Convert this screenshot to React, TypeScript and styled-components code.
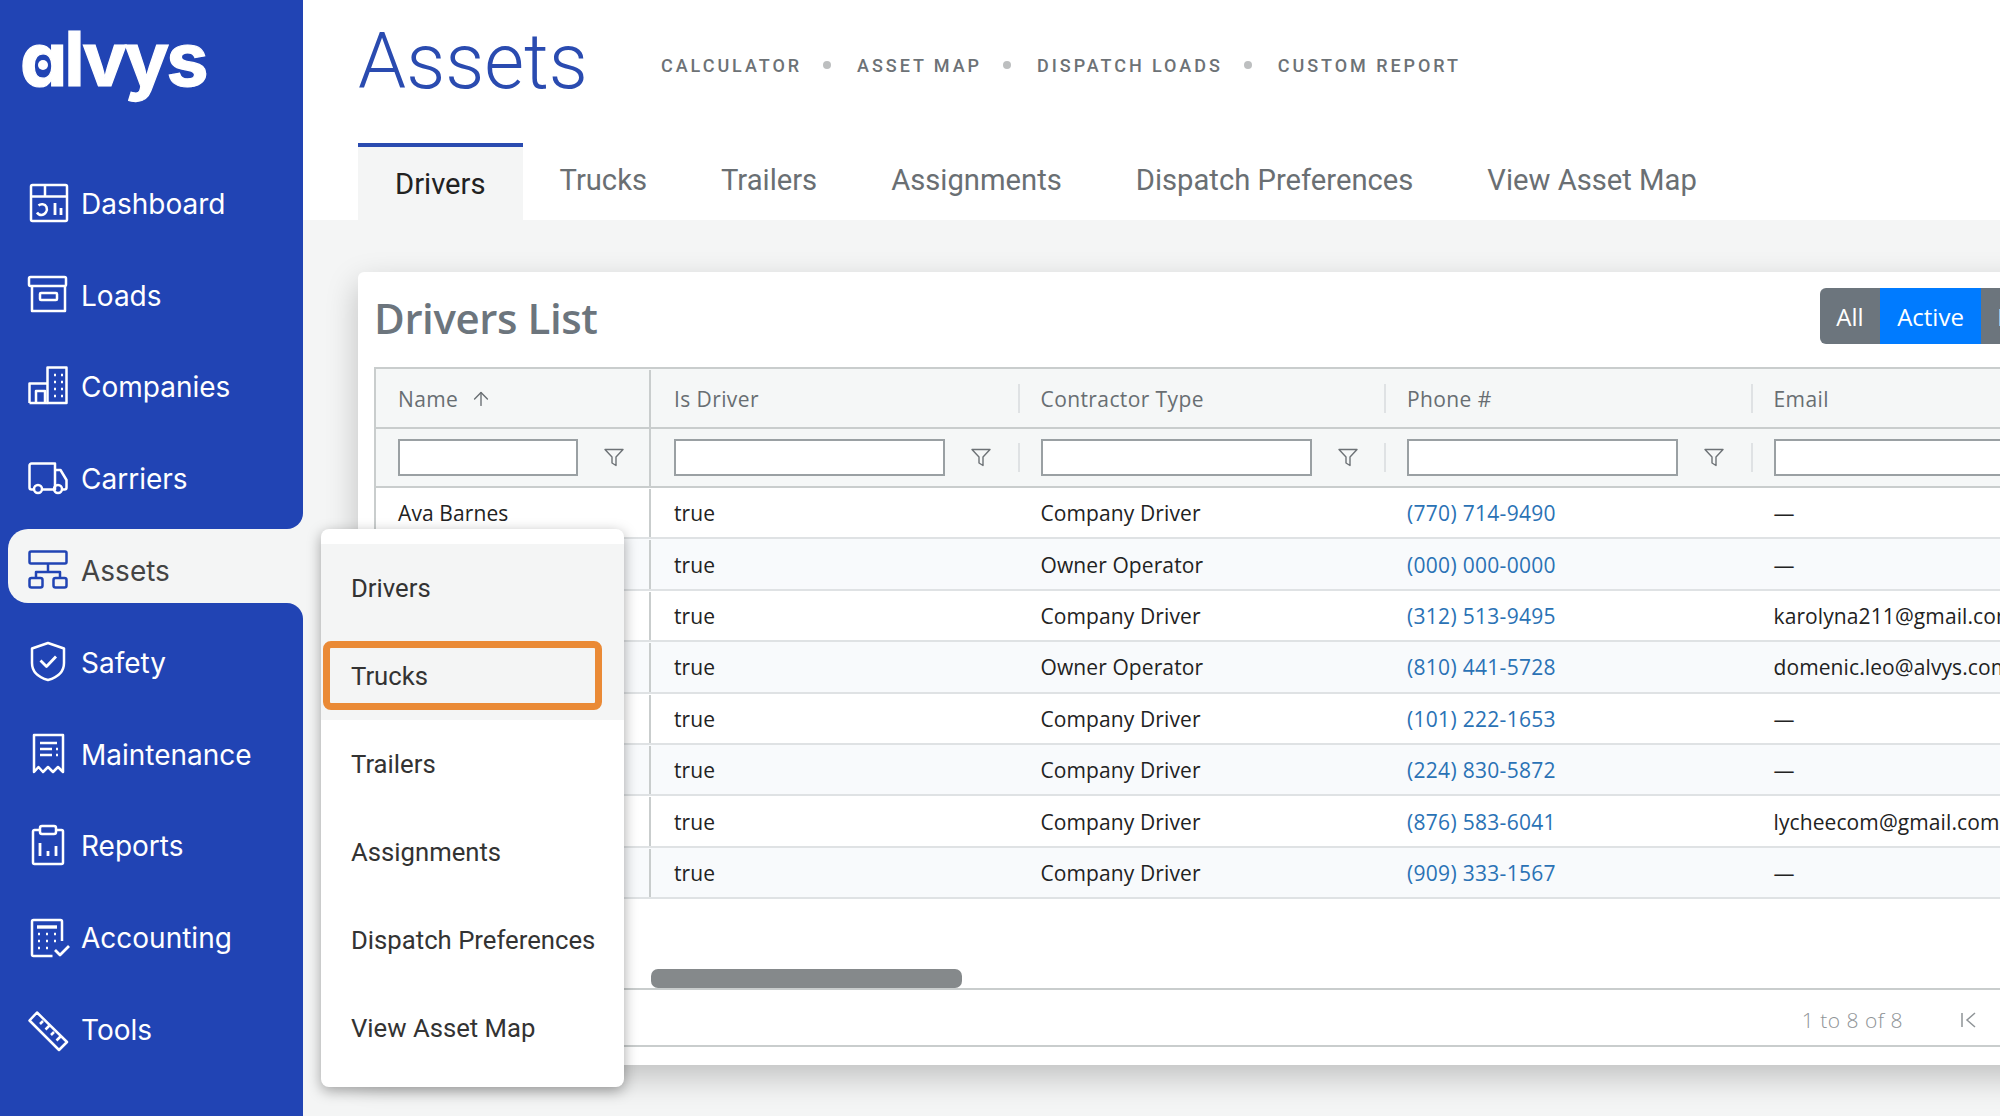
import { ReactNode } from 'react';
import styled, { createGlobalStyle } from 'styled-components';
import { ArrowUp } from 'lucide-react';

const GlobalStyle = createGlobalStyle`
  html, body {
    margin: 0;
    padding: 0;
    width: 2000px;
    height: 1116px;
    overflow: hidden;
    background: #f4f5f5;
  }
  * {
    box-sizing: border-box;
  }
`;

const BLUE = '#2144b4';

const Page = styled.div`
  position: relative;
  display: flex;
  width: 2000px;
  height: 1116px;
  overflow: hidden;
  background: #f4f5f5;
`;

/* sidebar */

const Sidebar = styled.aside`
  display: flex;
  flex-direction: column;
  flex: 0 0 303px;
  height: 100%;
`;

const SideTop = styled.div`
  height: 529px;
  background: ${BLUE};
  border-bottom-right-radius: 16px;
`;

const SideBottom = styled.div`
  flex: 1;
  padding-top: 14px;
  background: ${BLUE};
  border-top-right-radius: 16px;
`;

const ActiveWrap = styled.div`
  height: 74px;
  padding-left: 8px;
  background: linear-gradient(to right, ${BLUE} 30px, transparent 30px);
`;

const ActivePill = styled.div`
  display: flex;
  align-items: center;
  gap: 13px;
  height: 100%;
  padding: 10px 0 0 20px;
  background: #f4f5f5;
  border-radius: 20px 0 0 20px;
  color: #444;
  font-family: Inter, sans-serif;
  font-size: 28px;
  svg {
    color: ${BLUE};
  }
`;

const LogoBox = styled.div`
  position: relative;
  height: 158px;
  padding: 7px 0 0 20px;
`;

const LogoText = styled.span`
  display: block;
  color: #fff;
  font-family: Inter, sans-serif;
  font-size: 75px;
  font-weight: 700;
  line-height: 104px;
  letter-spacing: -3px;
  font-feature-settings: 'cv11' 1;
  -webkit-text-stroke: 1.2px #fff;
`;

const LogoDot = styled.span`
  position: absolute;
  left: 38px;
  top: 60px;
  width: 10px;
  height: 10px;
  border-radius: 50%;
  background: #fff;
`;

const NavRow = styled.div`
  display: flex;
  align-items: center;
  gap: 13px;
  height: 91.7px;
  padding-left: 28px;
  color: #fff;
  font-family: Inter, sans-serif;
  font-size: 28px;
`;

const IconSvg = styled.svg.attrs({
  viewBox: '0 0 40 40',
  fill: 'none',
  stroke: 'currentColor',
  strokeWidth: 2.5,
  strokeLinejoin: 'round',
})`
  flex: 0 0 40px;
  width: 40px;
  height: 40px;
  overflow: visible;
`;

const NavIcon = ({ children }: { children: ReactNode }) => <IconSvg>{children}</IconSvg>;

const DashboardIcon = () => (
  <NavIcon>
    <rect x="3" y="1" width="36" height="36" rx="1.5" />
    <path d="M3 12.500h36M17 1v11.500" />
    <path d="M10.500 21.500c2-1.800 6.500-1.800 8 1.500 1.300 3.300-1 8-5 8-2 0-3.500-.8-4.500-2.500" />
    <path d="M27 19v12M33 24v7" strokeWidth="2.800" />
  </NavIcon>
);

const LoadsIcon = () => (
  <NavIcon>
    <rect x="1" y="1" width="37" height="9" rx="1.500" />
    <path d="M4 10v25h33V10" />
    <rect x="12" y="17" width="17" height="7" rx="1" />
  </NavIcon>
);

const CompaniesIcon = () => (
  <NavIcon>
    <path d="M1.500 36V16.500h18" />
    <path d="M19.500 36V.5h19V36z" />
    <path d="M1.500 36h18M8 36V24h9v12" />
    <path d="M26 8h2M33 8h2M26 15h2M33 15h2M26 22h2M33 22h2M26 29h2M33 29h2" />
  </NavIcon>
);

const CarriersIcon = () => (
  <NavIcon>
    <path d="M6 30.500H3.500a2 2 0 0 1-2-2V6.500a2 2 0 0 1 2-2H27v26H14" />
    <path d="M27 11h5.500l6 10v7.500a2 2 0 0 1-2 2H34M27 30.500h-1" />
    <circle cx="10" cy="30" r="4" />
    <circle cx="30" cy="30" r="4" />
  </NavIcon>
);

const AssetsIcon = () => (
  <NavIcon>
    <rect x="1.500" y=".5" width="37" height="12" rx="1.500" />
    <path d="M20 12.500v8.500M8 27v-6h24v6" />
    <rect x="1.500" y="27" width="13" height="9.500" rx="2" />
    <rect x="25.500" y="27" width="13" height="9.500" rx="2" />
  </NavIcon>
);

const SafetyIcon = () => (
  <NavIcon>
    <path d="M20 0 36 5.500v14.500c0 9-7 14.500-16 17C11 34.500 4 29 4 20V5.500z" />
    <path d="m12.500 17.500 6 6 9.500-10" strokeWidth="2.800" />
  </NavIcon>
);

const MaintenanceIcon = () => (
  <NavIcon>
    <path d="M6 0h29v37l-5-5-5 5-5-5-5 5-4.500-5L6 37z" />
    <path d="M12 8h17M12 14h12M28 14h2M12 20h12M28 20h2" strokeWidth="2.600" />
  </NavIcon>
);

const ReportsIcon = () => (
  <NavIcon>
    <path d="M12 4H6.500A1.500 1.500 0 0 0 5 5.500v31A1.500 1.500 0 0 0 6.500 38h27a1.500 1.500 0 0 0 1.500-1.500v-31A1.500 1.500 0 0 0 33.500 4H28" />
    <rect x="12" y="0" width="16" height="8" rx="2" />
    <path d="M12 17v13M20 25v5M28 20v10" strokeWidth="2.800" />
  </NavIcon>
);

const AccountingIcon = () => (
  <NavIcon>
    <path d="M34 23V3.500A1.500 1.500 0 0 0 32.500 2h-27A1.500 1.500 0 0 0 4 3.500v33A1.500 1.500 0 0 0 5.500 38h19" />
    <path d="M9 9h20" strokeWidth="3.400" />
    <path d="M10 16h2M18 16h2M26 16h2M10 23h2M18 23h2M26 23h2M10 30h2M18 30h2" />
    <path d="m27 32 5 5 9-9" strokeWidth="2.800" />
  </NavIcon>
);

const ToolsIcon = () => (
  <NavIcon>
    <path d="M9 2.500 39 32l-8 8L1.500 10.500z" />
    <path d="m12 14 3-3M17.500 19.500l4-4M23 25l3-3M28.500 30.500l4-4" />
  </NavIcon>
);

/* main header */

const Main = styled.main`
  flex: 1;
  min-width: 0;
`;

const Header = styled.header`
  height: 220px;
  padding-left: 55px;
  background: #fff;
`;

const TitleRow = styled.div`
  display: flex;
  align-items: center;
  height: 143px;
  padding-bottom: 18px;
`;

const Title = styled.h1`
  width: 303px;
  margin: 0;
  color: #2a4bb0;
  font-family: Roboto, sans-serif;
  font-size: 77px;
  font-weight: 300;
  line-height: 1;
`;

const QuickLinks = styled.nav`
  display: flex;
  align-items: center;
  padding-top: 6px;
  color: #6d7276;
  font-family: Roboto, sans-serif;
  font-size: 18px;
  font-weight: 500;
  letter-spacing: 2.950px;
`;

const QuickDot = styled.span`
  width: 8px;
  height: 8px;
  margin: 0 26px 2px 21px;
  border-radius: 50%;
  background: #bdbfc0;
`;

const Tabs = styled.div`
  display: flex;
  height: 77px;
`;

const Tab = styled.div<{ $active?: boolean }>`
  display: flex;
  align-items: center;
  padding: 0 37px ${(p) => (p.$active ? '0' : '3px')};
  border-top: ${(p) => (p.$active ? '4px solid #2a4bb0' : 'none')};
  background: ${(p) => (p.$active ? '#f4f5f5' : 'transparent')};
  color: ${(p) => (p.$active ? '#222' : '#6a6f73')};
  font-family: Roboto, sans-serif;
  font-size: 29.200px;
`;

/* card */

const Content = styled.div`
  padding: 52px 0 0 55px;
`;

const Card = styled.section`
  width: 1775px;
  height: 793px;
  padding: 0 7px 0 16px;
  background: #fff;
  border-radius: 6px 0 0 0;
  box-shadow: 0 12px 32px rgba(0, 0, 0, 0.22);
  font-family: 'Open Sans', sans-serif;
`;

const CardHead = styled.div`
  display: flex;
  align-items: flex-start;
  justify-content: space-between;
  height: 95px;
  padding-right: 26px;
`;

const CardTitle = styled.h2`
  margin: 17px 0 0;
  color: #6c757d;
  font-size: 42px;
  font-weight: 600;
  line-height: 58px;
  letter-spacing: -0.4px;
`;

const Segment = styled.div`
  display: flex;
  margin-top: 16px;
  height: 56px;
  border-radius: 6px;
  overflow: hidden;
`;

const SegmentButton = styled.div<{ $active?: boolean; $width: number }>`
  display: flex;
  align-items: center;
  justify-content: center;
  width: ${(p) => p.$width}px;
  background: ${(p) => (p.$active ? '#007bff' : '#6c757d')};
  color: #fff;
  font-size: 24px;
`;

const Grid = styled.div`
  height: 680px;
  border: solid #c9cdcd;
  border-width: 2px 0 2px 2px;
  overflow: hidden;
`;

const Row = styled.div<{ $height: number; $bg?: string; $line?: string; $offset?: number }>`
  display: flex;
  height: ${(p) => p.$height}px;
  padding-top: ${(p) => p.$offset || 0}px;
  background: ${(p) => p.$bg || '#fff'};
  border-bottom: 2px solid ${(p) => p.$line || '#dfe2e4'};
  font-size: 21px;
  letter-spacing: 0.1px;
`;

const NameCell = styled.div`
  display: flex;
  align-items: center;
  flex: 0 0 275px;
  padding-left: 22px;
  border-right: 2px solid #c9cdcd;
  color: #222;
`;

const DataCell = styled.div<{ $divider?: boolean }>`
  position: relative;
  display: flex;
  align-items: center;
  flex: 0 0 366.500px;
  padding-left: 23px;
  color: #222;

  &::before {
    content: '';
    display: ${(p) => (p.$divider ? 'block' : 'none')};
    position: absolute;
    left: 0;
    top: 50%;
    width: 2px;
    height: 29px;
    margin-top: -15px;
    background: #dfe2e4;
  }
`;

const HeadLabel = styled.span`
  color: #686e72;
  letter-spacing: 0.4px;
`;

const SortIcon = styled(ArrowUp)`
  width: 22px;
  height: 22px;
  margin-left: 12px;
  color: #686e72;
`;

const FilterInput = styled.div<{ $width: number }>`
  flex: 0 0 ${(p) => p.$width}px;
  height: 37px;
  border: 2px solid #9aa0a3;
  background: #fff;
`;

const FunnelSvg = styled.svg.attrs({
  viewBox: '0 0 20 20',
  fill: 'none',
  stroke: '#6d7276',
  strokeWidth: 1.4,
  strokeLinejoin: 'round',
})`
  width: 20px;
  height: 20px;
  margin: 0 0 2px 26px;
`;

const Funnel = () => (
  <FunnelSvg>
    <path d="M1 2.500h18l-7 7.500v8.500l-4-2.500v-6z" />
  </FunnelSvg>
);

const PhoneLink = styled.span`
  color: #2a72b5;
  letter-spacing: 0.3px;
`;

const ScrollArea = styled.div`
  display: flex;
  align-items: flex-end;
  height: 91px;
  border-bottom: 2px solid #c9cdcd;
`;

const ScrollPin = styled.div`
  flex: 0 0 275px;
`;

const ScrollThumb = styled.div`
  width: 311px;
  height: 19px;
  background: #85898b;
  border-radius: 7px;
`;

const Pager = styled.div`
  display: flex;
  align-items: center;
  justify-content: flex-end;
  height: 60px;
  padding-right: 147px;
  color: #8f9497;
  font-size: 21px;
  font-weight: 300;
  letter-spacing: 0.5px;
`;

const PagerIcon = styled.svg.attrs({
  viewBox: '0 0 20 20',
  fill: 'none',
  stroke: '#8f9497',
  strokeWidth: 1.500,
})`
  width: 20px;
  height: 20px;
  margin-left: 56px;
`;

/* flyout */

const Flyout = styled.div`
  position: absolute;
  left: 321px;
  top: 529px;
  width: 303px;
  height: 558px;
  padding: 15px 0;
  background: #fff;
  border-radius: 8px;
  box-shadow: 0 4px 14px rgba(0, 0, 0, 0.35);
  font-family: Roboto, sans-serif;
`;

const FlyoutItem = styled.div<{ $shaded?: boolean }>`
  position: relative;
  display: flex;
  align-items: center;
  height: 88px;
  padding: 0 0 1px 30px;
  background: ${(p) => (p.$shaded ? '#f4f5f5' : '#fff')};
  color: #333;
  font-size: 25.700px;
`;

const Highlight = styled.div`
  position: absolute;
  left: 2px;
  top: 9px;
  width: 279px;
  height: 69px;
  border: 7px solid #ea8a36;
  border-radius: 8px;
`;

const topNav = [
  { label: 'Dashboard', icon: <DashboardIcon /> },
  { label: 'Loads', icon: <LoadsIcon /> },
  { label: 'Companies', icon: <CompaniesIcon /> },
  { label: 'Carriers', icon: <CarriersIcon /> },
];

const bottomNav = [
  { label: 'Safety', icon: <SafetyIcon /> },
  { label: 'Maintenance', icon: <MaintenanceIcon /> },
  { label: 'Reports', icon: <ReportsIcon /> },
  { label: 'Accounting', icon: <AccountingIcon /> },
  { label: 'Tools', icon: <ToolsIcon /> },
];

const tabs = ['Drivers', 'Trucks', 'Trailers', 'Assignments', 'Dispatch Preferences', 'View Asset Map'];
const links = ['CALCULATOR', 'ASSET MAP', 'DISPATCH LOADS', 'CUSTOM REPORT'];
const flyoutItems = ['Drivers', 'Trucks', 'Trailers', 'Assignments', 'Dispatch Preferences', 'View Asset Map'];

const drivers = [
  { name: 'Ava Barnes', type: 'Company Driver', phone: '(770) 714-9490', email: '—' },
  { name: '', type: 'Owner Operator', phone: '(000) 000-0000', email: '—' },
  { name: '', type: 'Company Driver', phone: '(312) 513-9495', email: 'karolyna211@gmail.com' },
  { name: '', type: 'Owner Operator', phone: '(810) 441-5728', email: 'domenic.leo@alvys.com' },
  { name: '', type: 'Company Driver', phone: '(101) 222-1653', email: '—' },
  { name: '', type: 'Company Driver', phone: '(224) 830-5872', email: '—' },
  { name: '', type: 'Company Driver', phone: '(876) 583-6041', email: 'lycheecom@gmail.com' },
  { name: '', type: 'Company Driver', phone: '(909) 333-1567', email: '—' },
];

export default function App() {
  return (
    <Page>
      <GlobalStyle />
      <Sidebar>
        <SideTop>
          <LogoBox>
            <LogoText>alvys</LogoText>
            <LogoDot />
          </LogoBox>
          {topNav.map((item) => (
            <NavRow key={item.label}>
              {item.icon}
              {item.label}
            </NavRow>
          ))}
        </SideTop>
        <ActiveWrap>
          <ActivePill>
            <AssetsIcon />
            Assets
          </ActivePill>
        </ActiveWrap>
        <SideBottom>
          {bottomNav.map((item) => (
            <NavRow key={item.label}>
              {item.icon}
              {item.label}
            </NavRow>
          ))}
        </SideBottom>
      </Sidebar>

      <Main>
        <Header>
          <TitleRow>
            <Title>Assets</Title>
            <QuickLinks>
              {links.map((link, i) => (
                <span key={link} style={{ display: 'contents' }}>
                  {i > 0 && <QuickDot />}
                  {link}
                </span>
              ))}
            </QuickLinks>
          </TitleRow>
          <Tabs>
            {tabs.map((tab, i) => (
              <Tab key={tab} $active={i === 0}>
                {tab}
              </Tab>
            ))}
          </Tabs>
        </Header>

        <Content>
          <Card>
            <CardHead>
              <CardTitle>Drivers List</CardTitle>
              <Segment>
                <SegmentButton $width={60}>All</SegmentButton>
                <SegmentButton $width={101} $active>
                  Active
                </SegmentButton>
                <SegmentButton $width={119}>Inactive</SegmentButton>
              </Segment>
            </CardHead>
            <Grid>
              <Row $height={60} $bg="#f5f7f7" $line="#c9cdcd" $offset={1}>
                <NameCell>
                  <HeadLabel>Name</HeadLabel>
                  <SortIcon strokeWidth={1.5} />
                </NameCell>
                <DataCell>
                  <HeadLabel>Is Driver</HeadLabel>
                </DataCell>
                <DataCell $divider>
                  <HeadLabel>Contractor Type</HeadLabel>
                </DataCell>
                <DataCell $divider>
                  <HeadLabel>Phone #</HeadLabel>
                </DataCell>
                <DataCell $divider>
                  <HeadLabel>Email</HeadLabel>
                </DataCell>
              </Row>
              <Row $height={59} $bg="#f5f7f7" $line="#c9cdcd">
                <NameCell>
                  <FilterInput $width={180} />
                  <Funnel />
                </NameCell>
                <DataCell>
                  <FilterInput $width={271} />
                  <Funnel />
                </DataCell>
                <DataCell $divider>
                  <FilterInput $width={271} />
                  <Funnel />
                </DataCell>
                <DataCell $divider>
                  <FilterInput $width={271} />
                  <Funnel />
                </DataCell>
                <DataCell $divider>
                  <FilterInput $width={271} />
                  <Funnel />
                </DataCell>
              </Row>
              {drivers.map((d, i) => (
                <Row key={d.phone} $height={51.400} $bg={i % 2 ? '#f8fafc' : '#fff'} $offset={1}>
                  <NameCell>{d.name}</NameCell>
                  <DataCell>true</DataCell>
                  <DataCell>{d.type}</DataCell>
                  <DataCell>
                    <PhoneLink>{d.phone}</PhoneLink>
                  </DataCell>
                  <DataCell>{d.email}</DataCell>
                </Row>
              ))}
              <ScrollArea>
                <ScrollPin />
                <ScrollThumb />
              </ScrollArea>
              <Pager>
                1 to 8 of 8
                <PagerIcon>
                  <path d="M3 3v14M16 3 8 10l8 7" />
                </PagerIcon>
              </Pager>
            </Grid>
          </Card>
        </Content>
      </Main>

      <Flyout>
        {flyoutItems.map((item, i) => (
          <FlyoutItem key={item} $shaded={i < 2}>
            {item}
            {i === 1 && <Highlight />}
          </FlyoutItem>
        ))}
      </Flyout>
    </Page>
  );
}
